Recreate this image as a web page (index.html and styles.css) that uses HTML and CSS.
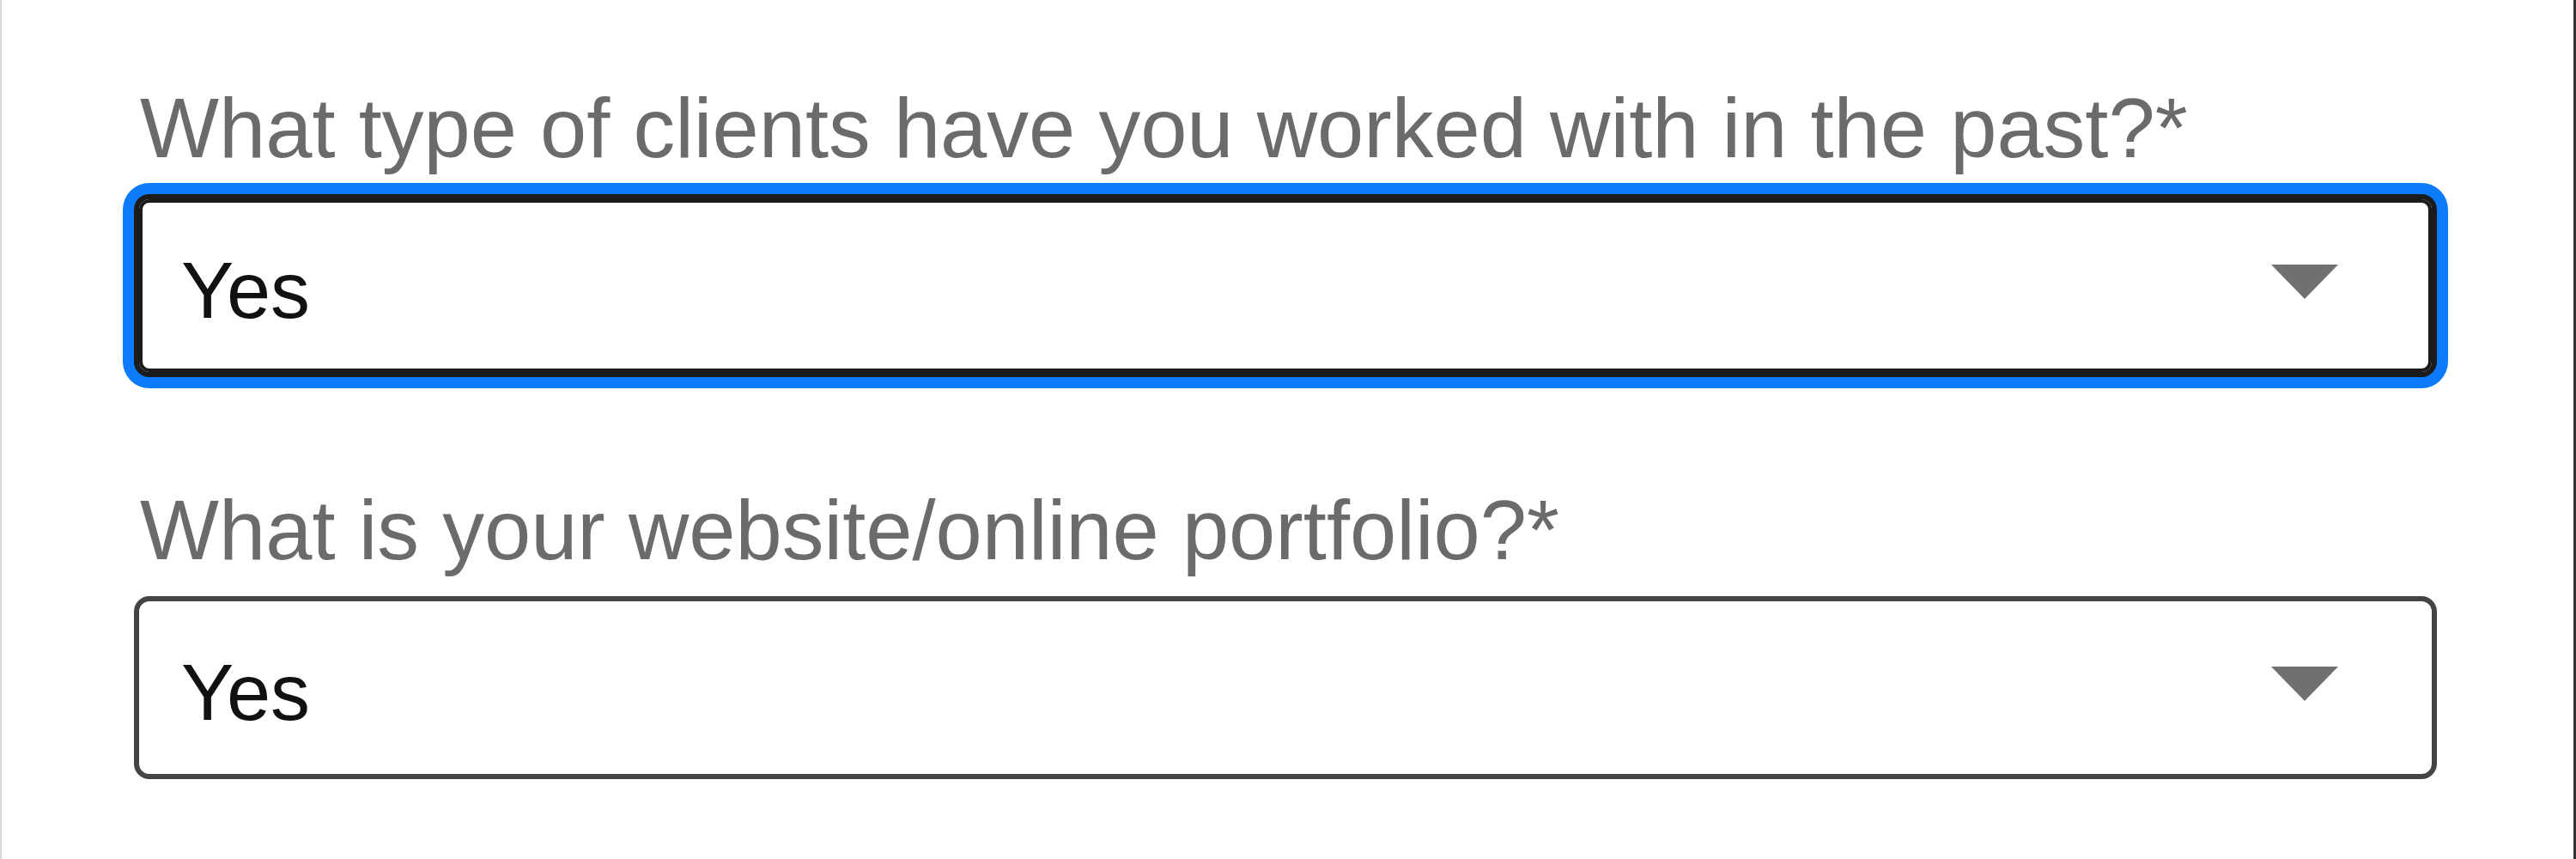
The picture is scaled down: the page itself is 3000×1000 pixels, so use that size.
FILE: index.html
```html
<!DOCTYPE html>
<html lang="en">
<head>
<meta charset="utf-8">
<title>Form</title>
<link rel="stylesheet" href="styles.css">
</head>
<body>
<div class="page">
  <form class="form">
    <div class="field">
      <label class="label">What type of clients have you worked with in the past?*</label>
      <div class="select focused">
        <span class="value">Yes</span>
        <svg class="arrow" width="78" height="40" viewBox="0 0 78 40"><path d="M0 0 H78 L39 40 Z" fill="#707070"/></svg>
      </div>
    </div>
    <div class="field">
      <label class="label">What is your website/online portfolio?*</label>
      <div class="select">
        <span class="value">Yes</span>
        <svg class="arrow" width="78" height="40" viewBox="0 0 78 40"><path d="M0 0 H78 L39 40 Z" fill="#707070"/></svg>
      </div>
    </div>
  </form>
</div>
</body>
</html>
```
FILE: styles.css
```css
html, body {
  margin: 0;
  padding: 0;
  background: #fff;
}
.page {
  box-sizing: border-box;
  width: 3000px;
  height: 1000px;
  border-left: 2px solid #d8d8d8;
  border-right: 3px solid #333;
  padding: 95px 0 0 154px;
  font-family: "Liberation Sans", Arial, Helvetica, sans-serif;
}
.form {
  display: flex;
  flex-direction: column;
  gap: 124px;
  width: 2682px;
}
.field {
  display: flex;
  flex-direction: column;
  gap: 21px;
}
.label {
  display: block;
  font-size: 97.5px;
  line-height: 110px;
  color: #6b6b6b;
  margin-left: 7px;
  white-space: nowrap;
}
.select {
  box-sizing: border-box;
  height: 213px;
  display: flex;
  align-items: flex-start;
  border: 6px solid #444;
  border-radius: 18px;
  padding: 56px 109px 0 49px;
  background: #fff;
}
.select.focused {
  border-color: #1b1b1b;
  box-shadow: inset 0 0 0 4px #1b1b1b, 0 0 0 13px #0b7bfa;
}
.value {
  flex: 1;
  font-size: 92px;
  line-height: 100px;
  color: #111;
}
.arrow {
  margin-top: 20px;
  flex: none;
}
```
